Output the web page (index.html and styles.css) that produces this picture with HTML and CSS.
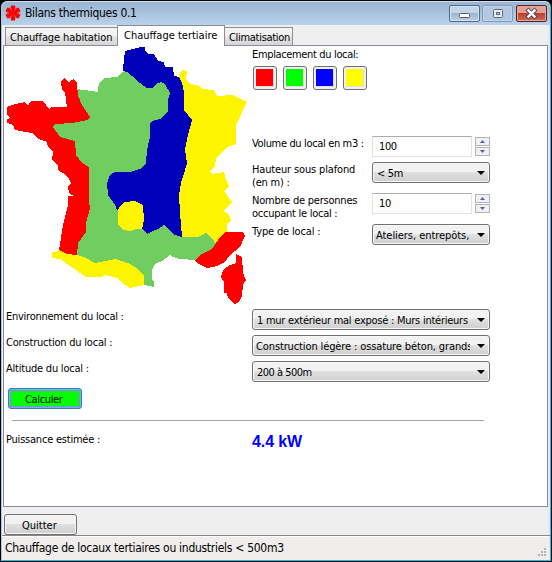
FILE: index.html
```html
<!DOCTYPE html>
<html lang="fr">
<head>
<meta charset="utf-8">
<title>Bilans thermiques 0.1</title>
<link rel="stylesheet" href="styles.css">
</head>
<body>
<div class="window">
  <header class="titlebar">
    <svg class="app-icon" width="16" height="16" viewBox="0 0 16 16">
      <g fill="#f00">
        <path d="M7.500 7 5.500 3.500 6 .5H10L10.500 3.500 8.500 7Z"/>
        <path d="M7.500 7 5.500 3.500 6 .5H10L10.500 3.500 8.500 7Z" transform="rotate(60 8 8)"/>
        <path d="M7.500 7 5.500 3.500 6 .5H10L10.500 3.500 8.500 7Z" transform="rotate(120 8 8)"/>
        <path d="M7.500 7 5.500 3.500 6 .5H10L10.500 3.500 8.500 7Z" transform="rotate(180 8 8)"/>
        <path d="M7.500 7 5.500 3.500 6 .5H10L10.500 3.500 8.500 7Z" transform="rotate(240 8 8)"/>
        <path d="M7.500 7 5.500 3.500 6 .5H10L10.500 3.500 8.500 7Z" transform="rotate(300 8 8)"/>
        <circle cx="8" cy="8" r="1.500"/>
      </g>
      <path stroke="#b08a9c" stroke-width=".9" d="M10 4.500 11.500 2M12 8h3.500M10 11.500l1.500 2.500M6 11.500 4.500 14M4 8H.5M6 4.500 4.500 2"/>
    </svg>
    <h1 class="title">Bilans thermiques 0.1</h1>
    <div class="controls">
      <span class="ctl"><svg width="29" height="15"><rect x="9.500" y="7.500" width="10" height="4" rx="1" fill="#fff" stroke="#555c6b"/></svg></span>
      <span class="ctl dim"><svg width="30" height="15"><rect x="10.500" y="3.500" width="9" height="8" rx="1" fill="#e4ebf3" stroke="#5f6878"/><rect x="13.500" y="6.500" width="3" height="2" fill="#b8cadf" stroke="#5f6878"/></svg></span>
      <span class="ctl close"><svg width="29" height="15"><path d="M11.500 4.500l6 6M17.500 4.500l-6 6" stroke="#53505c" stroke-width="4.400" stroke-linecap="square"/><path d="M11.500 4.500l6 6M17.500 4.500l-6 6" stroke="#fff" stroke-width="2.400" stroke-linecap="square"/></svg></span>
    </div>
  </header>

  <nav class="tabs">
    <span class="tab t1">Chauffage habitation</span>
    <span class="tab t2 active">Chauffage tertiaire</span>
    <span class="tab t3">Climatisation</span>
  </nav>

  <main class="panel">
    <section class="top">
      <svg class="map" width="248" height="260" viewBox="0 46 248 260" shape-rendering="crispEdges">
        <path fill="#70ce60" d="M78 89 82 90 93 91 97.500 92 98 87 100 82 105 78 117 77 121 73 127 70 150 80 175 80 190 120 190 225 198 237 206 233 212 238 216 244 210 255 195 260 180 259 173 257 170 255 162 261 155 264 152 270 152 280 154 281 154 287 150 286 144 285 134 275 100 266 70 255 70 240 85 205 85 170 60 142 48 130 48 120 75 115Z"/>
        <path fill="#0000b8" d="M123 72 123 69 125 51 133 49 141 47 145 47 145 51 148 54 154 54 158 61 164 62 165 67 173 67 174 76 179 77 182 83 184 92 184 110 192 120 188 135 185 150 187 163 183 178 185 178 190 180 185 237 182 237 175 235 170 231 164 225 158 229 153 231 147 234 142 229 138 215 117 210 115 205 108 195 107 183 110 175 115 172 130 172 142 168 146 163 147 150 150 137 150 123 155 120 160 119 168 112 168 100 170 93 165 84 161 82 156 84 153 88 147 88 140 83 132 76 127 72 123 71Z"/>
        <path fill="#fff500" d="M118 210 121 205 125 202 135 201 143 205 144 220 142 229 137 229 130 231 123 230 118 225Z"/>
        <path fill="#fff500" d="M179 77 180 72 183 70 187 71 186 80 190 84 200 86 202 89 214 90 217 96 233 95 237 97 247 102 236 125 236 144 227 147 216 158 215 166 210 171 212 174 224 172 226 180 225 177 229 186 224 191 232 202 223 211 229 214 231 220 227 225 228 236 216 244 212 238 206 233 198 237 182 237 180 213 179 195 181 183 185 170 187 163 185 150 188 135 192 120 184 110 184 92 182 83Z"/>
        <path fill="#fff500" d="M52 252 56 252 59 249 67 252 77 255 86 258 95 263 115 259 130 264 135 267 144 275 144 285 130 288 122 283 117 278 105 275 102 277 86 277 60 259 52 258Z"/>
        <path fill="#f00" d="M7 107 12 105 25 102 28 106 31 101 43 101 49 109 52 107 66 107 67 108 66 100 65 92 62 90 61 82 64 78 69 82 74 79 77 83 78 96 82 105 90 117 87 120 73 123 55 124 53 127 60 137 75 141 76 155 82 163 89 167 89 202 90 208 86 223 86 232 78 243 77 255 67 254 59 250 63 225 68 205 68 196 74 196 69 193 68 187 71 183 68 177 63 173 58 170 58 165 52 160 53 152 48 147 47 142 38 139 32 133 15 130 13 125 7 123 7 119 10 118 7 115Z"/>
        <path fill="#f00" d="M195 261 200 255 212 249 216 243 220 237 226 232 243 232 245 236 240 247 230 255 225 262 217 266 207 268 197 263Z"/>
        <path fill="#f00" d="M236 254 242 257 243 273 246 280 243 285 242 296 239 302 235 304 228 298 227 293 224 293 224 282 221 277 223 270 230 265 236 263Z"/>
      </svg>
      <div class="side">
        <div class="caption">Emplacement du local:</div>
        <div class="swatches">
          <span class="swatch"><i class="red"></i></span>
          <span class="swatch"><i class="green"></i></span>
          <span class="swatch"><i class="blue"></i></span>
          <span class="swatch"><i class="yellow"></i></span>
        </div>
        <div class="form">
          <label class="vol">Volume du local en m3 :</label>
          <div class="spin"><span class="field">100</span><span class="arrows"><b><svg width="13" height="7"><path d="M4 5 6.500 2 9 5Z"/></svg></b><b><svg width="13" height="7"><path d="M4 2 6.500 5 9 2Z"/></svg></b></span></div>
          <label><span class="l1">Hauteur sous plafond</span><br><span class="l2">(en m) :</span></label>
          <div class="combo"><span>&lt; 5m</span></div>
          <label><span class="l2">Nombre de personnes</span><br><span class="l3">occupant le local :</span></label>
          <div class="spin"><span class="field">10</span><span class="arrows"><b><svg width="13" height="7"><path d="M4 5 6.500 2 9 5Z"/></svg></b><b><svg width="13" height="7"><path d="M4 2 6.500 5 9 2Z"/></svg></b></span></div>
          <label class="l1">Type de local :</label>
          <div class="combo type"><span>Ateliers, entrepôts,</span></div>
        </div>
      </div>
    </section>

    <section class="rows">
      <label class="l3">Environnement du local :</label>
      <div class="combo env"><span>1 mur extérieur mal exposé : Murs intérieurs</span></div>
      <label class="l2">Construction du local :</label>
      <div class="combo cons"><span>Construction légère : ossature béton, grands</span></div>
      <label class="l2">Altitude du local :</label>
      <div class="combo alt"><span>200 à 500m</span></div>
    </section>

    <div class="calc"><span>Calculer</span></div>
    <hr class="rule">
    <section class="result">
      <label class="l2">Puissance estimée :</label>
      <strong>4.4 kW</strong>
    </section>
  </main>

  <div class="actions"><div class="quit">Quitter</div></div>
  <footer class="status">
    <span>Chauffage de locaux tertiaires ou industriels &lt; 500m3</span>
    <svg width="8" height="9"><path fill="#b5b2b5" d="M6 0h2v2H6zM3 3h2v2H3zM6 3h2v2H6zM0 6h2v2H0zM3 6h2v2H3zM6 6h2v2H6z"/></svg>
  </footer>
</div>
</body>
</html>
```
FILE: styles.css
```css
* { box-sizing: border-box; }
body {
  margin: 0;
  background: #000;
  font: 11px/13px "DejaVu Sans Condensed", "DejaVu Sans", sans-serif;
  color: #000;
  white-space: nowrap;
}
.window {
  width: 550px;
  height: 560px;
  margin: 1px;
  border: 1px solid #cfe0f2;
  border-left: 1px solid #aec8e4;
  border-right: 1px solid #19c5e0;
  border-bottom: 1px solid #19c5e0;
  border-radius: 6px 6px 0 0;
  background: #efefef;
  box-shadow: inset -2px 0 #dfeaf5;
  overflow: hidden;
}

.titlebar {
  display: flex;
  height: 23px;
  padding: 3px 3px 0 3px;
  background: linear-gradient(#9ab4d2, #b9d1ea);
}
.title {
  flex: 1;
  margin: 1px 0 0 4px;
  font-size: 12px;
  line-height: 15px;
  font-weight: normal;
  letter-spacing: -0.3px;
}
.controls { display: flex; gap: 2px; }
.ctl {
  display: block;
  width: 31px;
  height: 17px;
  border: 1px solid #4f6785;
  border-radius: 2px;
  background: linear-gradient(#c3d4e8 48%, #9db5d1 50%, #b9d0e8);
  box-shadow: inset 0 0 0 1px #d7e4f2;
}
.ctl svg { display: block; }
.dim { border-color: #8199b8; background: #b2c8e1; box-shadow: inset 0 0 0 1px #c3d5e9; }
.close {
  margin-left: 1px;
  border-color: #5a1c20;
  background: linear-gradient(#e2a091 48%, #bd3f2a 50%, #cf6a51);
  box-shadow: inset 0 0 0 1px #e5a99d;
}

.tabs {
  display: flex;
  align-items: flex-end;
  height: 20px;
  padding-left: 3px;
}
.tab {
  height: 18px;
  border: 1px solid #8c8c99;
  border-bottom: 0;
  padding: 3px 0 0 4px;
  background: linear-gradient(#f3f3f3 45%, #e6e6e6 50%, #d5d5d5);
}
.t1 { width: 113px; letter-spacing: -0.1px; }
.t2 { width: 108px; }
.t3 { width: 68px; border-left: 0; letter-spacing: -0.3px; }
.tab.active {
  position: relative;
  height: 21px;
  margin: 0 0 -1px -1px;
  padding-left: 6px;
  background: #fff;
}

.panel {
  width: 545px;
  height: 462px;
  margin-left: 1px;
  border: 1px solid #8b8b9a;
  background: #fff;
}
.top { display: flex; height: 262px; }
.map { display: block; margin-left: -4px; }
.side { width: 242px; margin-left: 4px; padding-top: 2px; }
.caption { letter-spacing: -0.35px; }
.swatches { display: flex; gap: 6px; margin: 5px 0 0 1px; }
.swatch {
  width: 24px;
  height: 24px;
  padding: 2px;
  border: 1px solid #707070;
  border-radius: 3px;
  background: #f0f0f0;
}
.swatch i { display: block; width: 18px; height: 18px; border: 1px solid #ddd; border-width: 0 1px 1px 0; }
.red { background: #f00; }
.green { background: #0f0; }
.blue { background: #00f; }
.yellow { background: #ff0; }

.form {
  display: grid;
  grid-template-columns: 120px 118px;
  grid-template-rows: 26px 31px 31px 21px;
  margin-top: 46px;
}
.form label, .rows label { padding-top: 1px; }
.vol { letter-spacing: -0.35px; }
.l1 { letter-spacing: -0.15px; }
.l2 { letter-spacing: -0.22px; }
.l3 { letter-spacing: -0.26px; }

.spin { display: flex; justify-content: space-between; height: 21px; }
.field {
  width: 100px;
  padding: 3px 0 0 6px;
  border: 1px solid #dfe2ea;
  border-top-color: #abadb3;
  letter-spacing: -0.4px;
}
.arrows { display: flex; flex-direction: column; gap: 1px; width: 15px; padding-top: 1px; }
.arrows b { height: 9px; border: 1px solid #b4b4b4; background: #f1f1f1; }
.arrows svg { display: block; fill: #4a61b8; }

.combo {
  display: flex;
  align-items: center;
  justify-content: space-between;
  height: 21px;
  padding: 0 4px;
  border: 1px solid #707070;
  border-radius: 3px;
  background: linear-gradient(#f2f2f2 45%, #e0e0e0 50%, #cfcfcf);
  box-shadow: inset 0 0 0 1px #f8f8f8;
}
.combo span { overflow: hidden; padding-top: 1px; letter-spacing: -0.3px; }
.combo::after {
  content: "";
  flex: none;
  border: 4px solid transparent;
  border-top: 4px solid #000;
  border-bottom: 0;
}
.combo.type { padding-left: 3px; }
.type span { letter-spacing: -0.05px; }
.combo.cons { padding-left: 3px; }
.cons span { width: 214px; letter-spacing: -0.12px; }
.env span { letter-spacing: -0.25px; }
.alt span { letter-spacing: -0.5px; }

.rows {
  display: grid;
  grid-template-columns: 246px 238px;
  grid-auto-rows: 26px;
  margin: 1px 0 0 2px;
}

.calc {
  width: 74px;
  height: 21px;
  margin: 1px 0 0 4px;
  padding: 1px;
  border: 1px solid #3c7fb1;
  border-radius: 3px;
  background: #55c0ee;
}
.calc span {
  display: block;
  height: 17px;
  padding: 2px 0 0 14px;
  border: 1px dotted #e040e0;
  background: #0f0 padding-box;
  background-color: #0f0;
  letter-spacing: -0.35px;
}
.rule { width: 472px; height: 1px; margin: 11px 0 0 8px; border: 0; background: #a0a0a0; }
.result {
  display: grid;
  grid-template-columns: 246px auto;
  margin: 12px 0 0 2px;
}
.result strong {
  font: bold 16px/18px "Liberation Sans", Arial, sans-serif;
  letter-spacing: -0.1px;
  color: #00f;
}

.actions { height: 29px; padding: 7px 0 0 2px; border-bottom: 1px solid #888; }
.quit {
  width: 73px;
  height: 21px;
  padding: 4px 0 0 17px;
  border: 1px solid #707070;
  border-radius: 3px;
  background: linear-gradient(#f2f2f2 45%, #e0e0e0 50%, #cfcfcf);
  box-shadow: inset 0 0 0 1px #f8f8f8;
}
.status {
  display: flex;
  justify-content: space-between;
  align-items: flex-end;
  height: 23px;
  margin-right: 1px;
  padding: 0 3px 2px 3px;
  border-top: 1px solid #fff;
  background: #f1edec;
  font-size: 12px;
  line-height: 17px;
}
.status span { letter-spacing: -0.28px; }
```
